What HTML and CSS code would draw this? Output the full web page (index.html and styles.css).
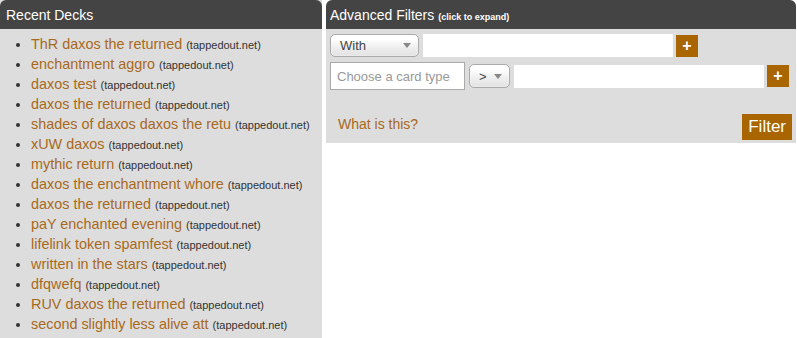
FILE: index.html
```html
<!DOCTYPE html>
<html lang="en">
<head>
  <meta charset="UTF-8" />
  <title>Decks</title>
  <link rel="stylesheet" href="styles.css">
</head>
<body>
  <div class="page">
    <section class="panel recent">
      <div class="panel-head">Recent Decks</div>
      <ul class="decks">
        <li><a href="#">ThR daxos the returned</a> <small>(tappedout.net)</small></li>
        <li><a href="#">enchantment aggro</a> <small>(tappedout.net)</small></li>
        <li><a href="#">daxos test</a> <small>(tappedout.net)</small></li>
        <li><a href="#">daxos the returned</a> <small>(tappedout.net)</small></li>
        <li><a href="#">shades of daxos daxos the retu</a> <small>(tappedout.net)</small></li>
        <li><a href="#">xUW daxos</a> <small>(tappedout.net)</small></li>
        <li><a href="#">mythic return</a> <small>(tappedout.net)</small></li>
        <li><a href="#">daxos the enchantment whore</a> <small>(tappedout.net)</small></li>
        <li><a href="#">daxos the returned</a> <small>(tappedout.net)</small></li>
        <li><a href="#">paY enchanted evening</a> <small>(tappedout.net)</small></li>
        <li><a href="#">lifelink token spamfest</a> <small>(tappedout.net)</small></li>
        <li><a href="#">written in the stars</a> <small>(tappedout.net)</small></li>
        <li><a href="#">dfqwefq</a> <small>(tappedout.net)</small></li>
        <li><a href="#">RUV daxos the returned</a> <small>(tappedout.net)</small></li>
        <li><a href="#">second slightly less alive att</a> <small>(tappedout.net)</small></li>
      </ul>
    </section>

    <section class="panel filters">
      <div class="panel-head">Advanced Filters <span class="hint">(click to expand)</span></div>
      <div class="filter-body">
        <div class="row">
          <div class="pick pick-with">With<span class="caret"></span></div>
          <input type="text" class="field field-wide" />
          <button class="plus">+</button>
        </div>
        <div class="row">
          <input type="text" class="field field-type" placeholder="Choose a card type" />
          <div class="pick pick-op">&gt;<span class="caret"></span></div>
          <input type="text" class="field field-wide" />
          <button class="plus">+</button>
        </div>
        <div class="foot">
          <a href="#" class="help">What is this?</a>
          <button class="go">Filter</button>
        </div>
      </div>
    </section>
  </div>
</body>
</html>
```

FILE: styles.css
```css
:root {
  --head: #444444;
  --body: #dddddd;
  --link: #a8691c;
  --accent: #a86500;
}

body {
  margin: 0;
  background: #ffffff;
  font-family: 'Liberation Sans', Arial, sans-serif;
  color: #333;
}

.page {
  display: flex;
  gap: 4px;
  align-items: flex-start;
}

.panel-head {
  background: var(--head);
  color: #fff;
  font-size: 14px;
  height: 28px;
  padding-top: 1px;
  line-height: 29px;
  border-radius: 6px 6px 0 0;
  white-space: nowrap;
}

.recent {
  width: 322px;
  height: 338px;
  background: var(--body);
}

.recent .panel-head {
  padding-left: 6px;
}

.decks {
  margin: 5px 0 0;
  padding-left: 31px;
  list-style: disc;
}

.decks li {
  height: 20px;
  font-size: 14.4px;
  line-height: 20px;
  white-space: nowrap;
}

.decks a {
  color: var(--link);
  text-decoration: none;
}

.decks small {
  font-size: 11px;
  line-height: 1;
  color: #333;
}

.filters {
  width: 470px;
}

.filters .panel-head {
  padding-left: 4px;
}

.hint {
  font-size: 9px;
  font-weight: bold;
}

.filter-body {
  background: var(--body);
  padding: 5px 4px 3px;
}

.row {
  display: flex;
  align-items: center;
  gap: 4px;
  margin-bottom: 5px;
}

.pick {
  box-sizing: border-box;
  display: flex;
  align-items: center;
  justify-content: space-between;
  height: 23px;
  padding: 0 7px 0 9px;
  border: 1px solid #aaa;
  border-radius: 5px;
  background: linear-gradient(#ffffff 20%, #eeeeee 60%, #e2e2e2);
  font-size: 13px;
  color: #444;
  box-shadow: 0 0 2px #fff inset;
}

.pick-with {
  width: 89px;
}

.pick-op {
  width: 41px;
  height: 24px;
}

.caret {
  width: 0;
  height: 0;
  border-left: 4px solid transparent;
  border-right: 4px solid transparent;
  border-top: 5px solid #888;
}

.field {
  box-sizing: border-box;
  height: 23px;
  border: none;
  background: #fff;
  font-family: inherit;
  font-size: 13px;
  padding: 0 6px;
  outline: none;
}

.field-wide {
  width: 250px;
}

.field-type {
  width: 135px;
  height: 28px;
  border: 1px solid #aaa;
}

.field-type::placeholder {
  color: #999;
}

.plus {
  width: 22px;
  height: 22px;
  margin-left: -1px;
  padding: 0;
  border: none;
  background: var(--accent);
  color: #fff;
  font-family: inherit;
  font-size: 16px;
  font-weight: bold;
  line-height: 22px;
}

.foot {
  display: flex;
  justify-content: space-between;
  align-items: flex-end;
  margin-top: 24px;
}

.help {
  color: var(--link);
  text-decoration: none;
  font-size: 14px;
  line-height: 16px;
  margin: 0 0 8px 8px;
}

.go {
  height: 26px;
  padding: 0 6px;
  border: none;
  background: var(--accent);
  color: #fff;
  font-family: inherit;
  font-size: 17px;
}
```
